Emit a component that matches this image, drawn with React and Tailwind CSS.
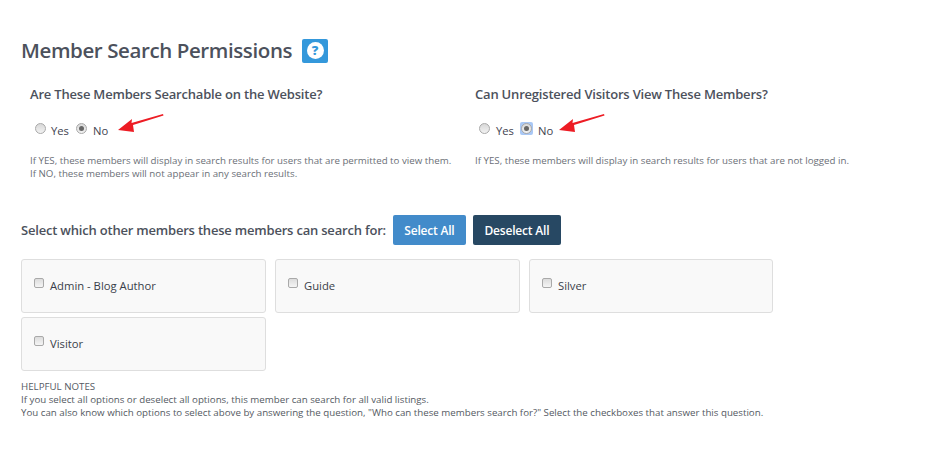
import React from 'react'

const Radio = ({ checked, focused }) => (
  <span className={`flex items-center justify-center shrink-0 -mt-[3px] ${focused ? 'w-[13px] h-[13px] -mx-[1px] rounded-[2px] bg-[#a9c8f5]' : 'w-[11px] h-[11px]'}`}>
    <span className="flex items-center justify-center w-[11px] h-[11px] rounded-full border border-[#a9a9a9] bg-gradient-to-b from-[#d8d8d8] to-[#f2f2f2]">
      {checked && <span className="w-[5px] h-[5px] rounded-full bg-[#666]" />}
    </span>
  </span>
)

// red annotation arrows, pasted over the form in the original screenshot
const Arrow = ({ className }) => (
  <svg className={className} width="47" height="18" viewBox="0 0 47 18">
    <polygon points="0,16 14,5 13.5,9 45,0 45.5,1.5 15,11 16,18" fill="#ed1c24" />
  </svg>
)

const Question = ({ title, children, arrowClass, focused, rowClass, yesClass, gap }) => (
  <div>
    <h3 className="text-[13px] leading-[18px] font-semibold tracking-[-0.2px] text-[#4c515c]">{title}</h3>
    <div className={`relative flex items-center h-[18px] mt-[18px] text-[11.25px] text-[#3f4450] ${rowClass}`}>
      <Radio />
      <span className={`${yesClass} mt-[2px]`}>Yes</span>
      <span className={gap}><Radio checked focused={focused} /></span>
      <span className="ml-[6px] mt-[2px]">No</span>
      <Arrow className={arrowClass} />
    </div>
    <div className="mt-[15px] text-[9.73px] leading-[13px] text-[#6b6f77]">{children}</div>
  </div>
)

const MemberCard = ({ label, className = 'w-[245px]' }) => (
  <div className={`flex items-start h-[54px] pl-[12px] pt-[18px] rounded-[3px] border border-[#dedede] bg-[#f9f9f9] ${className}`}>
    <span className="w-[10px] h-[10px] rounded-[2px] border border-[#a9a9a9] bg-gradient-to-b from-[#dcdcdc] to-[#f5f5f5] shrink-0" />
    <span className="ml-[6px] text-[11.25px] leading-[16px] font-medium text-[#3a3f4a]">{label}</span>
  </div>
)

export default function App() {
  return (
    <div className="w-[952px] h-[469px] bg-white pl-[21px] pt-[38px] font-['Open_Sans',sans-serif] overflow-hidden">
      <div className="flex items-center h-[25px]">
        <h1 className="text-[20.5px] leading-[25px] font-semibold tracking-[-0.4px] text-[#4c515c]">Member Search Permissions</h1>
        <span className="ml-[10px] flex items-center justify-center w-[26px] h-[24px] rounded-[2px] bg-[#3498db]">
          <span className="flex items-center justify-center w-[17px] h-[17px] rounded-full bg-white text-[13px] leading-none font-extrabold text-[#3498db]">?</span>
        </span>
      </div>

      <div className="flex mt-[22px] pl-[9px]">
        <div className="w-[445px]">
          <Question title="Are These Members Searchable on the Website?" arrowClass="absolute left-[83px] top-[-7px]" rowClass="ml-[5px]" yesClass="ml-[5px]" gap="ml-[7px]">
            <p>If YES, these members will display in search results for users that are permitted to view them.</p>
            <p>If NO, these members will not appear in any search results.</p>
          </Question>
        </div>
        <div>
          <Question title="Can Unregistered Visitors View These Members?" arrowClass="absolute left-[80px] top-[-7px]" focused rowClass="ml-[4px]" yesClass="ml-[6px]" gap="ml-[7px]">
            <p>If YES, these members will display in search results for users that are not logged in.</p>
          </Question>
        </div>
      </div>

      <div className="flex items-center mt-[35px] h-[30px]">
        <span className="pt-[1px] text-[13px] font-semibold tracking-[-0.2px] text-[#4c515c]">Select which other members these members can search for:</span>
        <button className="ml-[7px] w-[73px] h-[30px] pt-[1px] rounded-[2px] bg-[#428bca] text-white text-[12px] font-semibold tracking-[-0.2px]">Select All</button>
        <button className="ml-[7px] w-[88px] h-[30px] pt-[1px] rounded-[2px] bg-[#274863] text-white text-[12px] font-semibold tracking-[-0.2px]">Deselect All</button>
      </div>

      <div className="flex flex-wrap gap-x-[9px] gap-y-[4px] w-[760px] mt-[14px]">
        <MemberCard label="Admin - Blog Author" />
        <MemberCard label="Guide" />
        <MemberCard label="Silver" className="w-[244px]" />
        <MemberCard label="Visitor" />
      </div>

      <div className="mt-[9px] text-[9.73px] leading-[13px] text-[#555a63]">
        <p>HELPFUL NOTES</p>
        <p>If you select all options or deselect all options, this member can search for all valid listings.</p>
        <p>You can also know which options to select above by answering the question, "Who can these members search for?" Select the checkboxes that answer this question.</p>
      </div>
    </div>
  )
}
